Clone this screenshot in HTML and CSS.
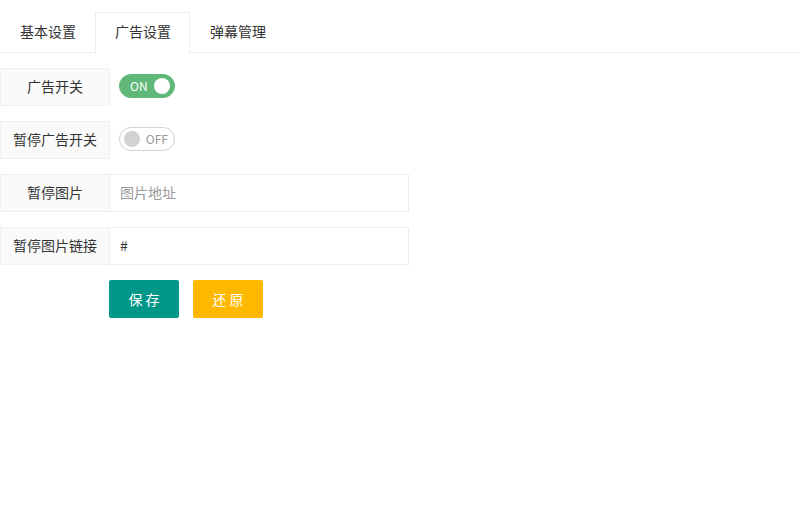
FILE: index.html
```html
<!DOCTYPE html>
<html lang="zh-CN">
  <head>
    <meta charset="UTF-8" />
    <title>广告设置</title>
    <link rel="stylesheet" href="styles.css">
  </head>
  <body>
    <div class="tab">
      <ul class="tab-title">
        <li>基本设置</li>
        <li class="this">广告设置</li>
        <li>弹幕管理</li>
      </ul>

      <form class="tab-content form-pane">
        <div class="form-item">
          <label class="form-label">广告开关</label>
          <div class="input-block">
            <span class="switch on"><em>ON</em><i></i></span>
          </div>
        </div>

        <div class="form-item">
          <label class="form-label">暂停广告开关</label>
          <div class="input-block">
            <span class="switch"><em>OFF</em><i></i></span>
          </div>
        </div>

        <div class="form-item">
          <label class="form-label">暂停图片</label>
          <div class="input-block">
            <input class="input" type="text" placeholder="图片地址">
          </div>
        </div>

        <div class="form-item">
          <label class="form-label">暂停图片链接</label>
          <div class="input-block">
            <input class="input" type="text" value="#">
          </div>
        </div>

        <div class="form-buttons">
          <button type="button" class="btn">保 存</button>
          <button type="button" class="btn btn-warm">还 原</button>
        </div>
      </form>
    </div>
  </body>
</html>
```

FILE: styles.css
```css
body {
  margin: 0;
  font-family: "Noto Sans CJK SC", "Liberation Sans", sans-serif;
  font-size: 14px;
  color: #333;
  background: #fff;
}

.tab-title {
  display: flex;
  margin: 12px 0 0;
  padding: 0;
  list-style: none;
  height: 40px;
  border-bottom: 1px solid #eee;
}

.tab-title li {
  padding: 0 19px 0 20px;
  line-height: 38px;
  height: 40px;
  white-space: nowrap;
}

.tab-title li.this {
  border: 1px solid #eee;
  border-bottom: none;
  height: 41px;
  background: #fff;
  line-height: 37px;
  padding: 0 18px 0 19px;
}

.tab-content {
  padding: 15px 0;
}

.form-item {
  display: flex;
  margin-bottom: 15px;
  height: 38px;
  width: 409px;
}

.form-label {
  width: 110px;
  height: 38px;
  box-sizing: border-box;
  border: 1px solid #f0f0f0;
  background: #fafafa;
  text-align: center;
  line-height: 34px;
  white-space: nowrap;
}

.input-block {
  flex: 1;
  display: flex;
  align-items: center;
}

.input {
  width: 100%;
  height: 38px;
  box-sizing: border-box;
  border: 1px solid #eee;
  border-left: none;
  padding: 0 10px 2px;
  font-family: inherit;
  font-size: 14px;
  color: #333;
  outline: none;
}

.input::placeholder {
  color: #999;
}

.switch {
  position: relative;
  margin: 0 0 2px 9px;
  width: 56px;
  height: 24px;
  box-sizing: border-box;
  border: 1px solid #d2d2d2;
  border-radius: 20px;
  background: #fff;
}

.switch em {
  position: absolute;
  right: 6px;
  top: 0;
  font-style: normal;
  font-size: 12px;
  line-height: 21px;
  color: #999;
}

.switch i {
  position: absolute;
  left: 4px;
  top: 3px;
  width: 16px;
  height: 16px;
  border-radius: 50%;
  background: #d2d2d2;
}

.switch.on {
  border-color: #5fb878;
  background: #5fb878;
}

.switch.on em {
  left: 10px;
  right: auto;
  color: #fff;
}

.switch.on i {
  left: auto;
  right: 4px;
  background: #fff;
}

.form-buttons {
  display: flex;
  gap: 14px;
  padding-left: 109px;
}

.btn {
  height: 38px;
  width: 70px;
  border: none;
  border-radius: 2px;
  background: #009688;
  color: #fff;
  font-family: inherit;
  font-size: 14px;
}

.btn-warm {
  background: #ffb800;
}
```
